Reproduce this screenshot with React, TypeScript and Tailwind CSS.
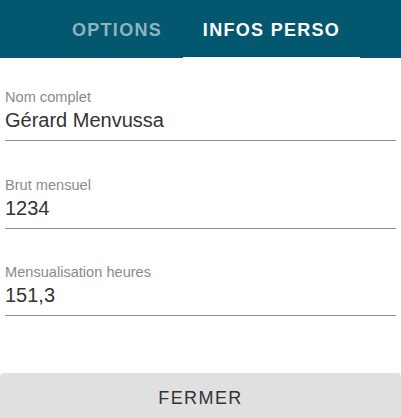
import React from "react";

const font = { fontFamily: '"Liberation Sans", Arial, sans-serif' };

function Field({ label, value }: { label: string; value: string }) {
  return (
    <div className="mx-[5px] border-b border-[#8c8c8c] pb-[8px]">
      <div className="text-[14.6px] leading-[16px] text-[#8a8a8a]">{label}</div>
      <div className="mt-[3px] text-[20px] leading-[24px] text-[#333333]">{value}</div>
    </div>
  );
}

export default function App() {
  return (
    <div className="relative h-[418px] w-[401px] overflow-hidden bg-white" style={font}>
      <div className="flex h-[58px] bg-[#03576f] pl-[51px]">
        <div className="flex h-full w-[132px] items-center justify-center pt-[2px] text-[18px] font-bold tracking-[1.3px] text-[#8fb3bf]">
          OPTIONS
        </div>
        <div className="relative flex h-full w-[177px] items-center justify-center pt-[2px] text-[18px] font-bold tracking-[1.3px] text-white">
          INFOS PERSO
          <div className="absolute bottom-[-2px] left-0 h-[3px] w-full bg-white" />
        </div>
      </div>
      <div className="flex flex-col gap-[36px] pt-[31px]">
        <Field label="Nom complet" value="Gérard Menvussa" />
        <Field label="Brut mensuel" value="1234" />
        <div className="-mt-[1px]">
          <Field label="Mensualisation heures" value="151,3" />
        </div>
      </div>
      <div className="mt-[57px] flex h-[60px] justify-center rounded-t-[4px] bg-[#e0e0e0] pt-[12px] text-[18px] tracking-[1.4px] text-[#333333]">
        FERMER
      </div>
    </div>
  );
}
